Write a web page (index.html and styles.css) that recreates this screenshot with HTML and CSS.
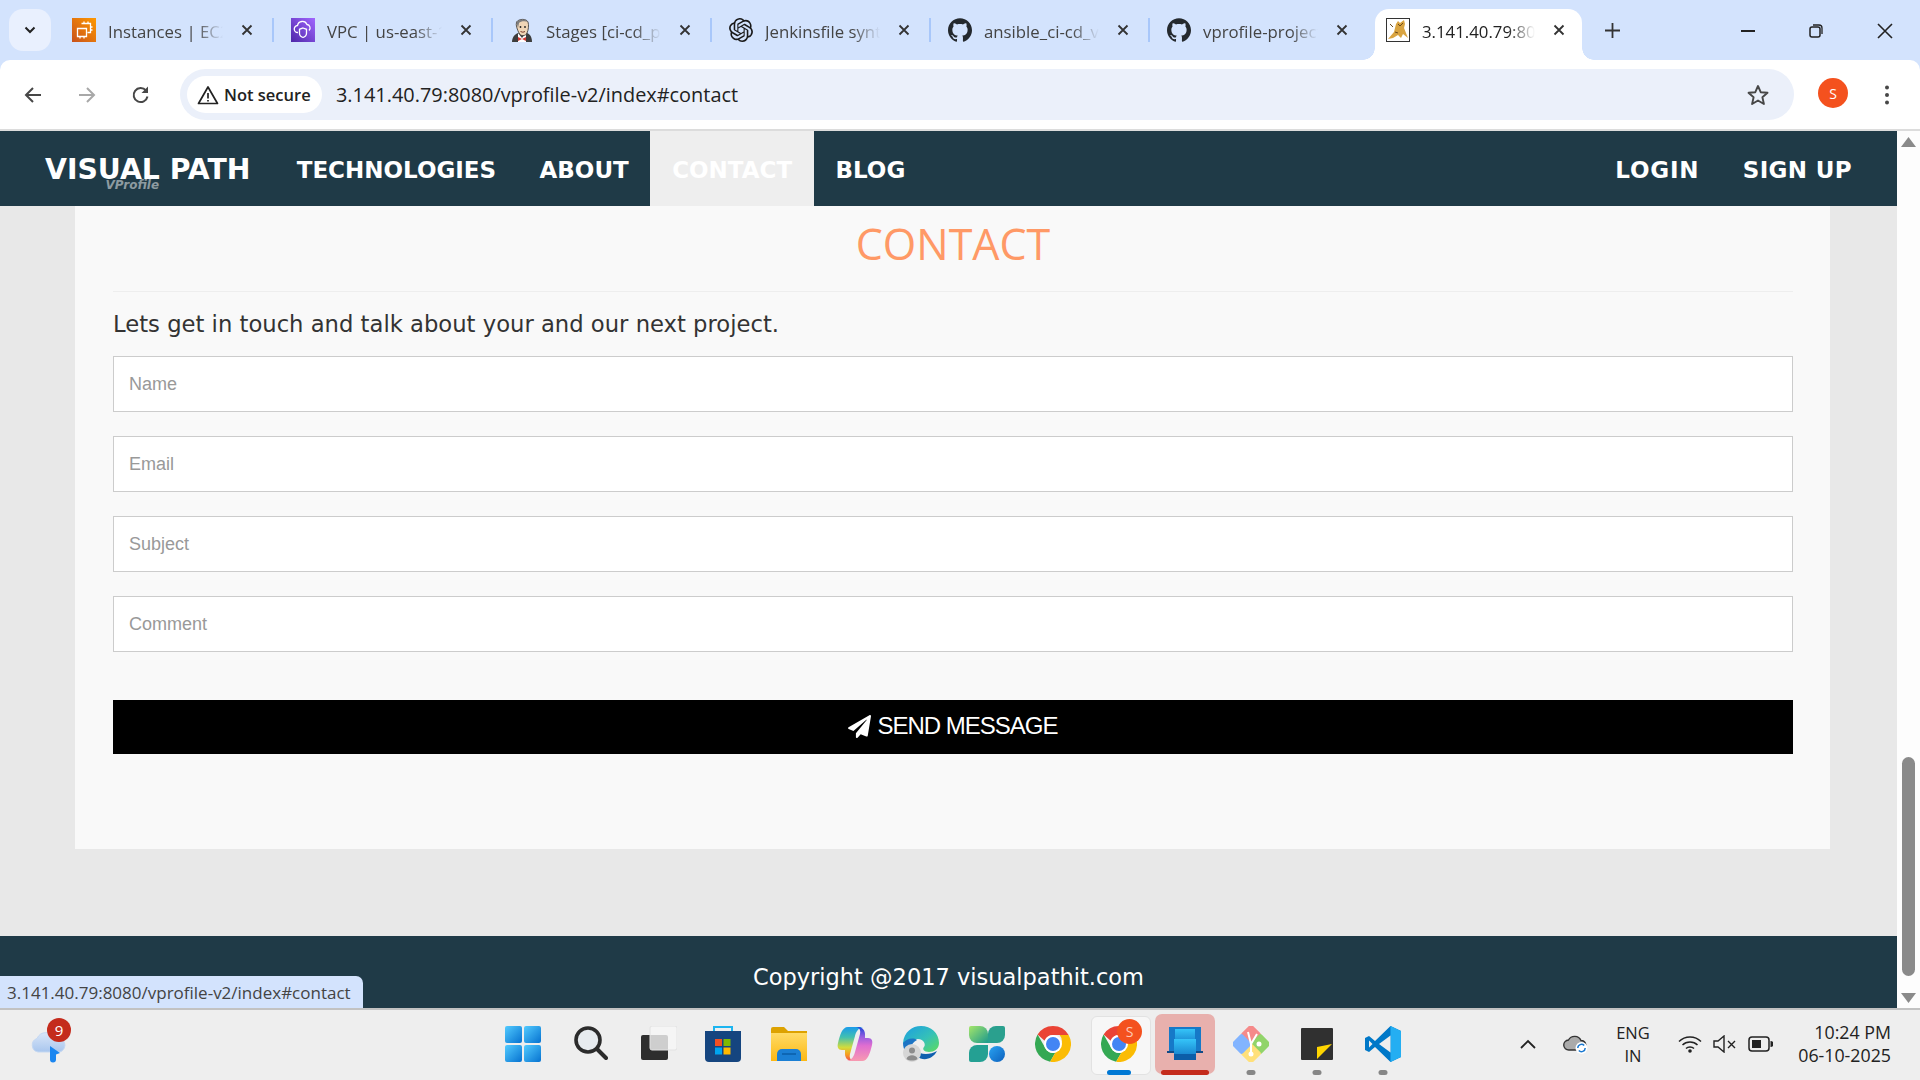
FILE: index.html
```html
<!DOCTYPE html>
<html lang="en">
<head>
<meta charset="utf-8">
<title>VProfile contact</title>
<link rel="stylesheet" href="styles.css">
</head>
<body>
<svg class="defs" width="0" height="0" aria-hidden="true">
  <defs>
    <symbol id="x" viewBox="0 0 12 12"><path d="M1.5 1.5l9 9M10.5 1.5l-9 9" fill="none" stroke="#333" stroke-width="1.8"/></symbol>
    <symbol id="gh" viewBox="0 0 24 24"><path fill="#24292e" d="M12 .297c-6.63 0-12 5.373-12 12 0 5.303 3.438 9.8 8.205 11.385.6.113.82-.258.82-.577 0-.285-.01-1.04-.015-2.04-3.338.724-4.042-1.61-4.042-1.61C4.422 18.07 3.633 17.7 3.633 17.7c-1.087-.744.084-.729.084-.729 1.205.084 1.838 1.236 1.838 1.236 1.07 1.835 2.809 1.305 3.495.998.108-.776.417-1.305.76-1.605-2.665-.3-5.466-1.332-5.466-5.93 0-1.31.465-2.38 1.235-3.22-.135-.303-.54-1.523.105-3.176 0 0 1.005-.322 3.3 1.23.96-.267 1.98-.399 3-.405 1.02.006 2.04.138 3 .405 2.28-1.552 3.285-1.23 3.285-1.23.645 1.653.24 2.873.12 3.176.765.84 1.23 1.91 1.23 3.22 0 4.61-2.805 5.625-5.475 5.92.42.36.81 1.096.81 2.22 0 1.606-.015 2.896-.015 3.286 0 .315.21.69.825.57C20.565 22.092 24 17.592 24 12.297c0-6.627-5.373-12-12-12"/></symbol>
    <symbol id="chrome" viewBox="0 0 36 36">
      <path fill="#ea4335" d="M18 0a18 18 0 0 1 15.6 9H18a9 9 0 0 0-8.4 5.8L2.6 8.6A18 18 0 0 1 18 0z"/>
      <path fill="#34a853" d="M2.6 8.6l7.8 13.6a9 9 0 0 0 9.9 4.5l-5.2 9A18 18 0 0 1 2.6 8.6z"/>
      <path fill="#fbbc04" d="M33.6 9A18 18 0 0 1 15.1 35.8l7.8-13.5A9 9 0 0 0 24.6 9z"/>
      <circle cx="18" cy="18" r="9" fill="#fff"/><circle cx="18" cy="18" r="7" fill="#4285f4"/>
    </symbol>
    <linearGradient id="gWin" x1="0" y1="0" x2="1" y2="1"><stop offset="0" stop-color="#52cbff"/><stop offset="1" stop-color="#0672d0"/></linearGradient>
    <linearGradient id="gEc2" x1="0" y1="1" x2="1" y2="0"><stop offset="0" stop-color="#c8511b"/><stop offset="1" stop-color="#ff9900"/></linearGradient>
    <linearGradient id="gVpc" x1="0" y1="1" x2="1" y2="0"><stop offset="0" stop-color="#4d27a8"/><stop offset="1" stop-color="#a166ff"/></linearGradient>
    <linearGradient id="gFolder" x1="0" y1="0" x2="0" y2="1"><stop offset="0" stop-color="#ffdb66"/><stop offset="1" stop-color="#fcb813"/></linearGradient>
    <linearGradient id="gCo1" x1="0" y1="0" x2="0" y2="1"><stop offset="0" stop-color="#1a9bea"/><stop offset=".3" stop-color="#42c0b0"/><stop offset=".6" stop-color="#d2dc3c"/><stop offset=".8" stop-color="#f6a01e"/><stop offset="1" stop-color="#ee4e4e"/></linearGradient>
    <linearGradient id="gCo2" x1="0" y1="0" x2="0" y2="1"><stop offset="0" stop-color="#f79ab0"/><stop offset=".45" stop-color="#e06ed0"/><stop offset=".7" stop-color="#9a5fe0"/><stop offset="1" stop-color="#1f45d8"/></linearGradient>
    <linearGradient id="gEdge" x1="0" y1="0" x2="1" y2="1"><stop offset="0" stop-color="#1b9de2"/><stop offset=".55" stop-color="#35c1b8"/><stop offset="1" stop-color="#5fdc5c"/></linearGradient>
    <linearGradient id="gLeaf" x1="0" y1="0" x2="1" y2="1"><stop offset="0" stop-color="#a5e66a"/><stop offset="1" stop-color="#1d9a8c"/></linearGradient>
    <linearGradient id="gBlue" x1="0" y1="0" x2="1" y2="1"><stop offset="0" stop-color="#2aa3f2"/><stop offset="1" stop-color="#0c60bd"/></linearGradient>
    <linearGradient id="gCloud" x1="0" y1="0" x2="0" y2="1"><stop offset="0" stop-color="#d9e6f8"/><stop offset="1" stop-color="#a9c6ee"/></linearGradient>
    <linearGradient id="gLap" x1="0" y1="0" x2="0" y2="1"><stop offset="0" stop-color="#35c4f8"/><stop offset="1" stop-color="#1073c4"/></linearGradient>
  </defs>
</svg>

<header class="tabstrip">
  <button class="tab-menu"><svg width="12" height="8" viewBox="0 0 12 8"><path d="M1.5 1.5L6 6l4.5-4.5" fill="none" stroke="#222" stroke-width="2"/></svg></button>
  <div class="tab">
    <svg class="fav" viewBox="0 0 24 24"><rect width="24" height="24" fill="url(#gEc2)"/><path d="M9.5 5.5h9v9h-3M5.5 10.5h9v8h-9zM12 5.5v-2M16 5.500v-2M20.500 9h-2M20.500 12h-2M8 20.500v-2M12 20.500v-2" fill="none" stroke="#fff" stroke-width="1.300"/></svg>
    <span class="tab-title">Instances | EC2 Management</span>
    <svg class="tab-x"><use href="#x"/></svg>
  </div>
  <div class="tab">
    <svg class="fav" viewBox="0 0 24 24"><rect width="24" height="24" fill="url(#gVpc)"/><path d="M7 14.500a3.500 3.500 0 0 1-.5-7A5 5 0 0 1 16 6.500a3.500 3.500 0 0 1 2 6" fill="none" stroke="#fff" stroke-width="1.300"/><path d="M12 10l3.500 1.300v4c0 2.500-2 3.700-3.500 4.200-1.500-.5-3.500-1.700-3.500-4.200v-4z" fill="none" stroke="#fff" stroke-width="1.300"/></svg>
    <span class="tab-title">VPC | us-east-1 console</span>
    <svg class="tab-x"><use href="#x"/></svg>
  </div>
  <div class="tab">
    <svg class="fav" viewBox="0 0 24 24"><path d="M2 24c0-5 3-8 6-9h9c3 1 5 4 5 9z" fill="#3d3d3d"/><path d="M8 15l4 5 4-5v9H8z" fill="#fff"/><path d="M6.500 4C9 .5 16.500 .5 18 4c1 3 .5 8-1 11-1.500 3.500-6.500 3.500-8 0C7.500 12 5.500 7.500 6.500 4z" fill="#f0d6b7" stroke="#333" stroke-width=".8"/><path d="M6.500 4C9 .5 16.500 .5 18 4 15.500 3 10.500 3 9 5L8 10z" fill="#7d7d7d"/><path d="M8 19l4 2 4-2v4l-4-2-4 2z" fill="#d33833"/><circle cx="10.500" cy="9" r=".9" fill="#222"/><circle cx="15" cy="9" r=".9" fill="#222"/><path d="M10.500 13.500q2.500 1.500 4.500 0" fill="none" stroke="#7a3a2a"/></svg>
    <span class="tab-title">Stages [ci-cd_pipeline]</span>
    <svg class="tab-x"><use href="#x"/></svg>
  </div>
  <div class="tab">
    <svg class="fav" viewBox="0 0 24 24"><path fill="#1a1a1a" d="M22.2819 9.8211a5.9847 5.9847 0 0 0-.5157-4.9108 6.0462 6.0462 0 0 0-6.5098-2.9A6.0651 6.0651 0 0 0 4.9807 4.1818a5.9847 5.9847 0 0 0-3.9977 2.9 6.0462 6.0462 0 0 0 .7427 7.0966 5.98 5.98 0 0 0 .511 4.9107 6.051 6.051 0 0 0 6.5146 2.9001A5.9847 5.9847 0 0 0 13.2599 24a6.0557 6.0557 0 0 0 5.7718-4.2058 5.9894 5.9894 0 0 0 3.9977-2.9001 6.0557 6.0557 0 0 0-.7475-7.0729zm-9.022 12.6081a4.4755 4.4755 0 0 1-2.8764-1.0408l.1419-.0804 4.7783-2.7582a.7948.7948 0 0 0 .3927-.6813v-6.7369l2.02 1.1686a.071.071 0 0 1 .038.052v5.5826a4.504 4.504 0 0 1-4.4945 4.4944zm-9.6607-4.1254a4.4708 4.4708 0 0 1-.5346-3.0137l.142.0852 4.783 2.7582a.7712.7712 0 0 0 .7806 0l5.8428-3.3685v2.3324a.0804.0804 0 0 1-.0332.0615L9.74 19.9502a4.4992 4.4992 0 0 1-6.1408-1.6464zM2.3408 7.8956a4.485 4.485 0 0 1 2.3655-1.9728V11.6a.7664.7664 0 0 0 .3879.6765l5.8144 3.3543-2.0201 1.1685a.0757.0757 0 0 1-.071 0l-4.8303-2.7865A4.504 4.504 0 0 1 2.3408 7.872zm16.5963 3.8558L13.1038 8.364 15.1192 7.2a.0757.0757 0 0 1 .071 0l4.8303 2.7913a4.4944 4.4944 0 0 1-.6765 8.1042v-5.6772a.79.79 0 0 0-.407-.667zm2.0107-3.0231l-.142-.0852-4.7735-2.7818a.7759.7759 0 0 0-.7854 0L9.409 9.2297V6.8974a.0662.0662 0 0 1 .0284-.0615l4.8303-2.7866a4.4992 4.4992 0 0 1 6.6802 4.66zM8.3065 12.863l-2.02-1.1638a.0804.0804 0 0 1-.038-.0567V6.0742a4.4992 4.4992 0 0 1 7.3757-3.4537l-.142.0805L8.704 5.459a.7948.7948 0 0 0-.3927.6813zm1.0976-2.3654l2.602-1.4998 2.6069 1.4998v2.9994l-2.5974 1.4997-2.6067-1.4997Z"/></svg>
    <span class="tab-title">Jenkinsfile syntax help</span>
    <svg class="tab-x"><use href="#x"/></svg>
  </div>
  <div class="tab">
    <svg class="fav"><use href="#gh"/></svg>
    <span class="tab-title">ansible_ci-cd_vprofile</span>
    <svg class="tab-x"><use href="#x"/></svg>
  </div>
  <div class="tab tab-plain">
    <svg class="fav"><use href="#gh"/></svg>
    <span class="tab-title">vprofile-project</span>
    <svg class="tab-x"><use href="#x"/></svg>
  </div>
  <div class="tab tab-active">
    <svg class="fav" viewBox="0 0 24 24"><rect x=".5" y=".5" width="23" height="23" fill="#fff" stroke="#333"/><path d="M2 21l6-7 2-8 2-3 2 2 4-3 1 4-1 4 4 10-5-4-2 4-3-3-5 3z" fill="#d9a441"/><path d="M12 6l2 2 3-3M9 14l3 1M4 6l3 3" fill="none" stroke="#6b4a1c"/></svg>
    <span class="tab-title">3.141.40.79:8080/vprofile</span>
    <svg class="tab-x"><use href="#x"/></svg>
  </div>
  <svg class="new-tab" width="15" height="15" viewBox="0 0 15 15"><path d="M7.500 0v15M0 7.500h15" stroke="#333" stroke-width="1.800"/></svg>
  <div class="win-controls">
    <svg width="14" height="14" viewBox="0 0 14 14"><path d="M0 7h14" stroke="#222" stroke-width="2"/></svg>
    <svg width="14" height="14" viewBox="0 0 14 14"><rect x="1" y="3" width="10" height="10" rx="2" fill="none" stroke="#222" stroke-width="1.500"/><path d="M4 1h6a3 3 0 0 1 3 3v6" fill="none" stroke="#222" stroke-width="1.300"/></svg>
    <svg width="16" height="16" viewBox="0 0 16 16"><path d="M1 1l14 14M15 1L1 15" stroke="#222" stroke-width="1.600"/></svg>
  </div>
</header>

<nav class="toolbar">
  <svg class="tool" width="20" height="20" viewBox="0 0 20 20"><path d="M18 10H3M10 3l-7 7 7 7" fill="none" stroke="#474747" stroke-width="2"/></svg>
  <svg class="tool" width="20" height="20" viewBox="0 0 20 20"><path d="M2 10h15M10 3l7 7-7 7" fill="none" stroke="#a8a8a8" stroke-width="2"/></svg>
  <svg class="tool" width="20" height="20" viewBox="0 0 20 20"><path d="M16.500 11.500A7 7 0 1 1 15 5.500" fill="none" stroke="#474747" stroke-width="2"/><path d="M17 1.500V8h-6.500z" fill="#474747"/></svg>
  <div class="omnibox">
    <div class="chip">
      <svg width="22" height="20" viewBox="0 0 22 20"><path d="M11 2l9.500 16.500h-19z" fill="none" stroke="#222" stroke-width="1.700" stroke-linejoin="round"/><path d="M11 8v5.500M11 15v1.600" stroke="#222" stroke-width="1.700"/></svg>
      <span>Not secure</span>
    </div>
    <span class="url">3.141.40.79:8080/vprofile-v2/index#contact</span>
    <svg class="star" width="24" height="24" viewBox="0 0 24 24"><path d="M12 3l2.700 6.200 6.800.6-5.100 4.500 1.500 6.700L12 17.500 6.100 21l1.500-6.700L2.500 9.800l6.800-.6z" fill="none" stroke="#474747" stroke-width="1.900" stroke-linejoin="round"/></svg>
  </div>
  <div class="avatar">S</div>
  <svg class="kebab" width="4" height="20" viewBox="0 0 4 20"><circle cx="2" cy="2.500" r="2" fill="#474747"/><circle cx="2" cy="10" r="2" fill="#474747"/><circle cx="2" cy="17.500" r="2" fill="#474747"/></svg>
</nav>

<main class="viewport">
  <div class="page">
    <div class="site-nav">
      <a class="brand">VISUAL PATH<small class="brand-sub">VProfile</small></a>
      <a class="nav-link">TECHNOLOGIES</a>
      <a class="nav-link">ABOUT</a>
      <a class="nav-link nav-active">CONTACT</a>
      <a class="nav-link">BLOG</a>
      <span class="nav-spacer"></span>
      <a class="nav-link nav-login">LOGIN</a>
      <a class="nav-link nav-signup">SIGN UP</a>
    </div>
    <section class="content">
      <h2 class="heading">CONTACT</h2>
      <p class="lead">Lets get in touch and talk about your and our next project.</p>
      <form class="form">
        <input class="field" placeholder="Name">
        <input class="field" placeholder="Email">
        <input class="field" placeholder="Subject">
        <input class="field" placeholder="Comment">
        <button class="send" type="button">
          <svg width="23" height="23" viewBox="0 0 512 512"><path fill="#fff" d="M476 3.200L12.500 270.600c-18.100 10.400-15.800 35.600 2.200 43.200L121 358.400l287.300-253.200c5.500-4.900 13.300 2.600 8.600 8.300L176 407v80.500c0 23.600 28.500 32.900 42.500 15.800L282 426l124.600 52.200c14.200 6 30.400-2.900 33-18.200l72-432C515 7.800 493.300-6.800 476 3.200z"/></svg>
          SEND MESSAGE
        </button>
      </form>
    </section>
    <footer class="site-footer">Copyright @2017 visualpathit.com</footer>
    <div class="status">3.141.40.79:8080/vprofile-v2/index#contact</div>
  </div>
  <aside class="scrollbar">
    <svg width="15" height="10" viewBox="0 0 15 10"><path d="M7.500 0L15 10H0z" fill="#8a8a8a"/></svg>
    <div class="thumb"></div>
    <svg width="15" height="10" viewBox="0 0 15 10"><path d="M0 0h15L7.500 10z" fill="#8a8a8a"/></svg>
  </aside>
</main>

<footer class="taskbar">
  <div class="tb-left">
    <div class="weather">
      <svg width="36" height="34" viewBox="0 0 36 34"><path d="M8 22a7 7 0 0 1-1-13.500A10 10 0 0 1 25 8a7 7 0 0 1 5 14z" fill="url(#gCloud)" stroke="#c5d8f2"/><path d="M20 16l10 7-4 1.500v5a3 3 0 0 1-6 0z" fill="#1a86f0"/></svg>
      <span class="badge">9</span>
    </div>
  </div>
  <div class="tb-center">
    <div class="tb-cell tb-win"><svg width="36" height="36" viewBox="0 0 36 36"><rect x="0" y="0" width="17" height="17" rx="2" fill="url(#gWin)"/><rect x="19" y="0" width="17" height="17" rx="2" fill="url(#gWin)"/><rect x="0" y="19" width="17" height="17" rx="2" fill="url(#gWin)"/><rect x="19" y="19" width="17" height="17" rx="2" fill="url(#gWin)"/></svg></div>
    <div class="tb-cell"><svg width="34" height="36" viewBox="0 0 34 36"><circle cx="14" cy="14" r="12" fill="#e7ebef" stroke="#2b2b2b" stroke-width="3.600"/><path d="M23 23l9 9" stroke="#2b2b2b" stroke-width="4" stroke-linecap="round"/></svg></div>
    <div class="tb-cell tb-view"><svg width="36" height="36" viewBox="0 0 36 36"><rect x="0" y="9" width="27" height="25" rx="2" fill="#2e2e2e"/><rect x="9" y="0" width="27" height="24" rx="2" fill="#f6f6f6" fill-opacity=".8" stroke="#e2e2e2"/></svg></div>
    <div class="tb-cell"><svg width="36" height="36" viewBox="0 0 36 36"><path d="M9 6V1h18v5" fill="none" stroke="#1cb5f0" stroke-width="2"/><path d="M0 5h36v27a4 4 0 0 1-4 4H4a4 4 0 0 1-4-4z" fill="#15457f"/><rect x="10" y="13" width="7" height="7" fill="#f25022"/><rect x="18.500" y="13" width="7" height="7" fill="#7fba00"/><rect x="10" y="21.500" width="7" height="7" fill="#00a4ef"/><rect x="18.500" y="21.500" width="7" height="7" fill="#ffb900"/></svg></div>
    <div class="tb-cell"><svg width="36" height="34" viewBox="0 0 36 34"><path d="M0 2a2 2 0 0 1 2-2h11l4 4h19v4H0z" fill="#dda200"/><path d="M0 6h36v28H0z" fill="url(#gFolder)"/><path d="M6 34v-7a5 5 0 0 1 5-5h14a5 5 0 0 1 5 5v7z" fill="#1b7fd4"/><path d="M11 27h14" stroke="#0b5ea8" stroke-width="1.500"/></svg></div>
    <div class="tb-cell"><svg width="36" height="34" viewBox="0 0 36 34"><path d="M11 0H26C21 1 19 5 18 9L13 27C12 31 14 34 17 34H15C10 34 8 30 8 27V23H5C1 23 0 20 1 16C3 8 5 0 11 0Z" fill="url(#gCo1)"/><path transform="rotate(180 18 17)" d="M11 0H26C21 1 19 5 18 9L13 27C12 31 14 34 17 34H15C10 34 8 30 8 27V23H5C1 23 0 20 1 16C3 8 5 0 11 0Z" fill="url(#gCo2)"/></svg></div>
    <div class="tb-cell"><svg width="36" height="36" viewBox="0 0 36 36"><path d="M0 17C1 6 9 0 18 0c10 0 18 7 18 17 0 6-5 9-10 9-5 0-7-3-5-5 2-2 0-8-6-8C8 13 4 18 0 17z" fill="url(#gEdge)"/><path d="M0 17c3-4 10-6 14-3-7 3-8 12-3 18C4 30 0 24 0 17z" fill="#1c74c4"/><path d="M14 30c6 6 16 3 20-5-5 3-12 4-17 2z" fill="#0f5fae"/><circle cx="9" cy="27" r="9" fill="#d6d6d6"/><circle cx="9" cy="24.500" r="3" fill="#8c8c8c"/><path d="M3.500 33c1-5 10-5 11 0-3 2-8 2-11 0z" fill="#8c8c8c"/></svg></div>
    <div class="tb-cell"><svg width="36" height="36" viewBox="0 0 36 36"><path d="M0 2a2 2 0 0 1 2-2h9a8 8 0 0 1 8 8v9H8a8 8 0 0 1-8-8z" fill="url(#gLeaf)"/><path d="M19 8a8 8 0 0 1 8-8h7a2 2 0 0 1 2 2v7a8 8 0 0 1-8 8h-9z" fill="#2aa08e"/><path d="M0 27a8 8 0 0 1 8-8h11v9a8 8 0 0 1-8 8H2a2 2 0 0 1-2-2z" fill="#24a093"/><circle cx="28" cy="28" r="8" fill="url(#gBlue)"/></svg></div>
    <div class="tb-cell"><svg width="36" height="36"><use href="#chrome"/></svg></div>
    <div class="tb-cell tb-active">
      <svg width="36" height="36"><use href="#chrome"/></svg>
      <span class="tile-avatar">S</span>
      <i class="bar bar-blue"></i>
    </div>
    <div class="tb-cell tb-alert">
      <svg width="36" height="34" viewBox="0 0 36 34"><path d="M2 0h32v26H2z" fill="#1679c8"/><path d="M8 2h20v18H8z" fill="url(#gLap)"/><path d="M0 24h36v2H0z" fill="#124a86"/><path d="M7 12h22v19a2 2 0 0 1-2 2H9a2 2 0 0 1-2-2z" fill="url(#gLap)"/><path d="M7 27h22v6H7z" fill="#0c5da8"/></svg>
      <i class="bar bar-red"></i>
    </div>
    <div class="tb-cell"><svg width="36" height="36" viewBox="0 0 36 36"><rect x="10.500" y="1" width="15" height="15" rx="2" transform="rotate(45 18 8.500)" fill="#f58a8a"/><rect x="20" y="10.500" width="15" height="15" rx="2" transform="rotate(45 27.500 18)" fill="#91d46a"/><rect x="10.500" y="20" width="15" height="15" rx="2" transform="rotate(45 18 27.500)" fill="#ffe07a"/><rect x="1" y="10.500" width="15" height="15" rx="2" transform="rotate(45 8.500 18)" fill="#82b4ff"/><path d="M15 6l3 12v10M24 8l-6 10" fill="none" stroke="#fff" stroke-width="2"/><circle cx="18" cy="28" r="2.500" fill="#fff"/><circle cx="26" cy="18" r="2.500" fill="#fff"/></svg><i class="bar bar-gray"></i></div>
    <div class="tb-cell"><svg width="32" height="32" viewBox="0 0 32 32"><rect width="32" height="32" rx="1" fill="#303030"/><path d="M16 31V19l15-3z" fill="#ffd500"/></svg><i class="bar bar-gray"></i></div>
    <div class="tb-cell"><svg width="36" height="36" viewBox="0 0 36 36"><path d="M25.500 0L36 5v26l-10.500 5L10 21l-6 5-4-2v-12l4-2 6 5z" fill="#0078c8"/><path d="M25.500 0L36 5v26l-10.500 5z" fill="#24aef2"/><path d="M25.500 9.500L14 18l11.500 8.500z" fill="#eeeeee"/><path d="M4 14.500L7.500 18 4 21.500z" fill="#eeeeee"/></svg><i class="bar bar-gray"></i></div>
  </div>
  <div class="tray">
    <svg class="t-chevron" width="16" height="10" viewBox="0 0 16 10"><path d="M1 9l7-7 7 7" fill="none" stroke="#222" stroke-width="1.800"/></svg>
    <svg class="t-cloud" width="26" height="20" viewBox="0 0 26 20"><path d="M6 16a5 5 0 0 1-.5-10A7 7 0 0 1 18 6.500 5 5 0 0 1 20 16z" fill="#aaaaaa" stroke="#333" stroke-width="1.400"/><circle cx="18.500" cy="14" r="6" fill="#fff"/><path d="M14.800 14a3.700 3.700 0 0 1 6.400-2.500M22.200 14a3.700 3.700 0 0 1-6.400 2.500" fill="none" stroke="#1a78d0" stroke-width="1.500"/></svg>
    <div class="lang"><span>ENG</span><span>IN</span></div>
    <svg class="t-wifi" width="24" height="18" viewBox="0 0 24 18"><path d="M1 6.500c6-6 16-6 22 0M4.500 10c4-4 11-4 15 0M8 13.500c2-2 6-2 8 0" fill="none" stroke="#222" stroke-width="1.500"/><circle cx="12" cy="16" r="1.800" fill="#222"/></svg>
    <svg class="t-mute" width="24" height="18" viewBox="0 0 24 18"><path d="M1 6h4l6-5v16l-6-5H1z" fill="none" stroke="#222" stroke-width="1.400"/><path d="M15 6l7 7M22 6l-7 7" stroke="#222" stroke-width="1.400"/></svg>
    <svg class="t-batt" width="25" height="16" viewBox="0 0 25 16"><rect x="1" y="1" width="20" height="14" rx="3" fill="none" stroke="#222" stroke-width="1.500"/><rect x="4" y="4" width="9" height="8" fill="#222"/><path d="M22.500 5a3 3 0 0 1 0 6z" fill="#222"/></svg>
    <div class="clock"><span>10:24 PM</span><span>06-10-2025</span></div>
  </div>
</footer>
</body>
</html>
```

FILE: styles.css
```css
* { box-sizing: border-box; }
html, body { margin: 0; height: 100%; }
body {
  width: 1920px; height: 1080px; overflow: hidden;
  display: flex; flex-direction: column;
  background: #d3e3fd;
  font-family: "Open Sans", "Liberation Sans", sans-serif;
}
.defs { display: block; height: 0; }

/* tab strip */
.tabstrip { height: 60px; flex: none; display: flex; align-items: flex-start; padding-left: 9px; }
.tab-menu {
  width: 42px; height: 42px; margin-top: 9px; margin-right: 4px;
  border: 0; border-radius: 14px; background: #e9f0fe;
  display: flex; align-items: center; justify-content: center; padding: 0;
}
.tab {
  width: 219px; height: 60px; flex: none;
  display: flex; align-items: center; padding: 0 0 0 17px; position: relative;
}
.tab::after {
  content: ""; position: absolute; right: 0; top: 18px; width: 2px; height: 24px; background: #a8c7fa;
}
.tab-plain::after { display: none; }
.fav { width: 24px; height: 24px; flex: none; margin-right: 12px; }
.tab-title {
  width: 115px; flex: none; overflow: hidden; white-space: nowrap;
  font-size: 16.800px; color: #444; line-height: 24px; margin-top: 3px;
  -webkit-mask-image: linear-gradient(90deg, #000 76%, transparent 100%);
  mask-image: linear-gradient(90deg, #000 76%, transparent 100%);
}
.tab-x { width: 12px; height: 12px; flex: none; margin-left: 18px; margin-top: -1px; }
.tab-active {
  width: 207px; margin-left: 6px; height: 51px; margin-top: 9px; padding: 0 0 9px 11px;
  background: #fff; border-radius: 14px 14px 0 0; position: relative;
}
.tab-active .tab-title { color: #222; width: 113px; }
.tab-active .tab-x { margin-left: 18px; margin-top: -1px; }
.tab-active::after {
  right: -12px; top: auto; bottom: 0; width: 12px; height: 12px; background: radial-gradient(circle at 100% 0, transparent 11.500px, #fff 12px);
}
.tab-active::before {
  content: ""; position: absolute; left: -12px; bottom: 0; width: 12px; height: 12px;
  background: radial-gradient(circle at 0 0, transparent 11.500px, #fff 12px);
}
.new-tab { margin: 23px 0 0 23px; flex: none; }
.win-controls { margin-left: auto; display: flex; align-items: center; gap: 54px; padding: 23px 27px 0 0; }

/* toolbar */
.toolbar {
  height: 71px; flex: none; background: #fff; border-radius: 10px 10px 0 0;
  border-bottom: 2px solid #dcdcdc;
  display: flex; align-items: flex-start; padding-left: 23px;
}
.tool { flex: none; margin-top: 25px; margin-right: 34px; }
.omnibox {
  width: 1614px; height: 51px; margin-top: 9px; margin-left: -5px; flex: none;
  background: #ebf0fa; border-radius: 26px;
  display: flex; align-items: center; padding-left: 7px;
}
.chip {
  height: 37px; width: 135px; background: #fff; border-radius: 19px;
  display: flex; align-items: center; gap: 5px; padding-left: 10px;
  font-size: 16.500px; font-weight: 600; color: #222;
  flex: none;
}
.url { margin-left: 14px; font-size: 19.900px; color: #222; white-space: nowrap; }
.star { margin-left: auto; margin-right: 24px; flex: none; }
.avatar {
  width: 30px; height: 30px; border-radius: 50%; background: #f4511e; color: #fff;
  font-size: 14px; display: flex; align-items: center; justify-content: center;
  margin: 18px 0 0 24px; flex: none;
}
.kebab { margin: 25px 0 0 37px; flex: none; }

/* web page */
.viewport { height: 877px; flex: none; display: flex; background: #fff; }
.page {
  width: 1897px; flex: none; position: relative; overflow: hidden;
  background: #e8e8e8; display: flex; flex-direction: column;
  font-family: "DejaVu Sans", sans-serif;
}
.site-nav {
  height: 75px; flex: none; background: #1f3a47; display: flex; align-items: stretch;
  padding: 0 23.300px 0 22.500px;
  color: #fff; font-weight: 700;
}
.brand {
  position: relative; display: flex; align-items: center; padding: 2px 22.500px 0; margin-right: 2px;
  font-size: 28.300px; white-space: nowrap;
}
.brand-sub {
  position: absolute; left: 83px; top: 47px; font-size: 12px; line-height: 14px;
  font-style: italic; color: #8d9ba1;
}
.nav-link { display: flex; align-items: center; padding: 2px 21.700px 0; font-size: 23px; white-space: nowrap; }
.nav-active { background: #eeeeee; }
.nav-login { letter-spacing: .8px; }
.nav-signup { letter-spacing: .35px; }
.nav-spacer { flex: 1; }
.content {
  width: 1755px; height: 643px; margin-left: 75px; flex: none;
  background: #f9f9f9; padding: 0 37px 0 38px; color: #333;
}
.heading {
  margin: 0; height: 86px; border-bottom: 1px solid #eeeeee; padding-top: 8px;
  text-align: center; font: 400 43px/60px "Open Sans", sans-serif; color: #ff9966;
}
.lead { margin: 0; padding-top: 16px; font-size: 22.700px; line-height: 32px; height: 64px; color: #333; }
.form { display: flex; flex-direction: column; gap: 24px; }
.field {
  display: block; width: 100%; height: 56px; border: 1px solid #ccc; background: #fff;
  padding: 0 15px; font: 18px "Liberation Sans", sans-serif; border-radius: 0; outline: 0;
}
.field::placeholder { color: #999; opacity: 1; }
.send {
  margin-top: 24px; height: 54px; width: 100%; border: 0; background: #000; color: #fff;
  font: 24px "Liberation Sans", sans-serif; letter-spacing: -1px;
  display: flex; align-items: center; justify-content: center; gap: 6px; padding: 0 0 2px;
}
.site-footer {
  margin-top: 87px; height: 72px; flex: none; background: #1f3a47; color: #fff;
  display: flex; align-items: center; justify-content: center; padding: 10px 0 0;
  font-size: 22.500px;
}
.status {
  position: absolute; left: 0; bottom: 0; width: 363px; height: 32px;
  background: #d3e3fd; border-radius: 0 7px 0 0; padding-left: 7px;
  font: 17px/33px "Open Sans", sans-serif; color: #444; white-space: nowrap;
}
.scrollbar {
  width: 23px; flex: none; background: #fdfdfd; position: relative;
  display: flex; flex-direction: column; align-items: center; padding-top: 6px;
}
.thumb { width: 13px; height: 219px; margin-top: 610px; border-radius: 7px; background: #8a8a8a; }
.scrollbar svg:last-child { margin-top: 17px; }

/* taskbar */
.taskbar {
  height: 72px; flex: none; background: #eeeeee; border-top: 2px solid #c2c2c2;
  display: flex; color: #222;
}
.tb-left { width: 492px; flex: none; padding: 20px 0 0 30px; }
.weather { position: relative; width: 36px; height: 34px; }
.badge {
  position: absolute; left: 17px; top: -12px; width: 24px; height: 24px; border-radius: 50%;
  background: #c42b1c; color: #fff; font-size: 15px; line-height: 24px; text-align: center;
}
.tb-center { display: flex; flex: none; }
.tb-cell {
  width: 66px; height: 70px; flex: none; position: relative;
  display: flex; align-items: center; justify-content: center; padding-bottom: 2px;
}
.tb-win { padding-right: 4px; }
.tb-view { padding-left: 4px; }
.tb-active::before {
  content: ""; position: absolute; left: 5px; top: 6px; width: 58px; height: 57px;
  background: #f7f7f7; border: 1px solid #e2e2e2; border-radius: 6px;
}
.tb-active svg { position: relative; }
.tb-alert::before {
  content: ""; position: absolute; left: 3px; top: 4px; width: 60px; height: 60px;
  background: #e8b0ad; border-radius: 7px;
}
.tb-alert svg { position: relative; }
.tile-avatar {
  position: absolute; left: 31px; top: 9px; width: 25px; height: 25px; border-radius: 50%;
  background: #f4511e; color: #ffc9b5; font-size: 14px; line-height: 25px; text-align: center;
}
.bar { position: absolute; left: 50%; bottom: 5px; height: 5px; border-radius: 3px; transform: translateX(-50%); }
.bar-blue { width: 24px; background: #0078d4; }
.bar-red { width: 48px; background: #c42b1c; }
.bar-gray { width: 9px; background: #868686; }
.tray { position: relative; flex: 1; display: flex; align-items: center; padding-left: 104px; padding-bottom: 2px; }
.t-chevron { margin-right: 27px; flex: none; }
.t-cloud { flex: none; }
.lang {
  width: 94px; flex: none; margin-left: -3px; display: flex; flex-direction: column; align-items: center;
  font-size: 16.500px; line-height: 23px;
}
.t-wifi { margin-left: -2px; margin-right: 11px; flex: none; }
.t-mute { margin-right: 11px; flex: none; }
.t-batt { flex: none; }
.clock {
  margin-left: auto; margin-right: 29px; display: flex; flex-direction: column; align-items: flex-end;
  font-size: 17.800px; line-height: 23px;
}
```
